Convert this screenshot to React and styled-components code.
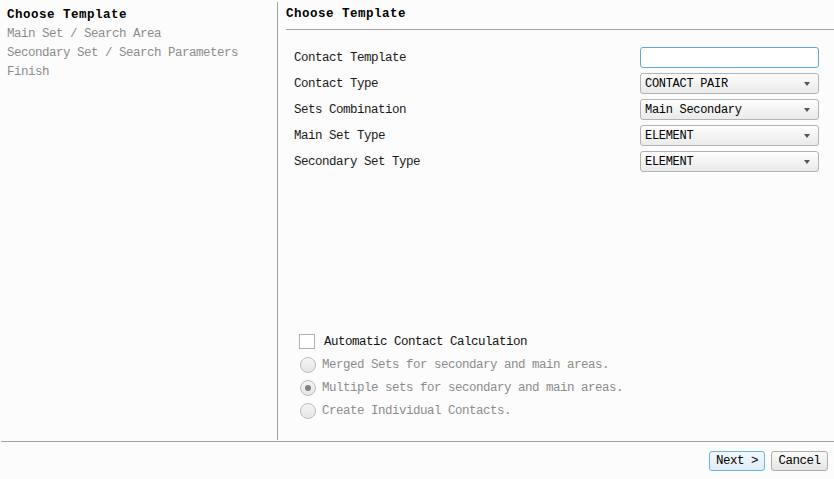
import React from "react";
import styled, { createGlobalStyle } from "styled-components";

const Global = createGlobalStyle`
  html, body { margin: 0; padding: 0; background: #fcfcfc; }
  * { box-sizing: border-box; }
`;

const Window = styled.div`
  width: 834px;
  height: 479px;
  background: #fcfcfc;
  font-family: "Liberation Mono", "DejaVu Sans Mono", monospace;
  font-size: 12.5px;
  letter-spacing: -0.5px;
  color: #111;
  display: flex;
  flex-direction: column;
  overflow: hidden;
`;

const Main = styled.div`
  height: 440px;
  padding-top: 2px;
  display: flex;
`;

const Sidebar = styled.nav`
  width: 278px;
  flex: none;
  border-right: 1px solid #a3a3a3;
  padding: 4px 0 0 7px;
  display: flex;
  flex-direction: column;
`;

const NavItem = styled.div`
  height: 19px;
  line-height: 19px;
  white-space: nowrap;
  color: ${(p) => (p.$active ? "#000" : "#8c8c8c")};
  font-weight: ${(p) => (p.$active ? 700 : 400)};
  letter-spacing: ${(p) => (p.$active ? "0.5px" : "-0.5px")};
`;

const Panel = styled.section`
  flex: 1;
  display: flex;
  flex-direction: column;
  padding-left: 8px;
`;

const Header = styled.div`
  height: 28px;
  border-bottom: 1px solid #a3a3a3;
  padding-top: 3px;
  line-height: 19px;
  font-weight: 700;
  letter-spacing: 0.5px;
  color: #000;
`;

const Form = styled.div`
  margin-top: 17px;
  padding: 0 15px 0 8px;
  display: grid;
  grid-template-columns: 1fr 179px;
  grid-auto-rows: 21px;
  row-gap: 5px;
  align-items: center;
`;

const Label = styled.label`
  white-space: nowrap;
  color: #1a1a1a;
`;

const TextInput = styled.div`
  height: 21px;
  border: 1px solid #5aa9e6;
  border-radius: 3px;
  background: #fff;
`;

const Select = styled.div`
  height: 21px;
  border: 1px solid #b3b3b3;
  border-radius: 3px;
  background: linear-gradient(#fdfdfd, #eaeaea);
  display: flex;
  align-items: center;
  justify-content: space-between;
  padding: 0 9px 0 4px;
  color: #000;
  white-space: nowrap;
  font-size: 12px;
  letter-spacing: -0.3px;
`;

const Arrow = styled.span`
  width: 0;
  height: 0;
  border-left: 3.5px solid transparent;
  border-right: 3.5px solid transparent;
  border-top: 4px solid #555;
  margin-right: -1px;
`;

const Options = styled.div`
  margin-top: auto;
  padding: 0 0 18px 13px;
  display: flex;
  flex-direction: column;
`;

const OptionRow = styled.div`
  height: 23px;
  display: flex;
  align-items: center;
  white-space: nowrap;
  color: ${(p) => (p.$disabled ? "#8c8c8c" : "#111")};
`;

const CheckBox = styled.span`
  width: 16px;
  height: 15px;
  border: 1px solid #b0b0b0;
  background: #fff;
  margin-right: 9px;
  flex: none;
`;

const Radio = styled.span`
  width: 16px;
  height: 16px;
  border-radius: 50%;
  border: 1px solid #bcbcbc;
  background: linear-gradient(#f4f4f4, #e6e6e6);
  margin: 0 6px 0 1px;
  flex: none;
  display: flex;
  align-items: center;
  justify-content: center;
  &::after {
    content: "";
    width: 6px;
    height: 6px;
    border-radius: 50%;
    background: ${(p) => (p.$checked ? "#808080" : "transparent")};
  }
`;

const Footer = styled.footer`
  margin: 1px 0 0 1px;
  border-top: 1px solid #a3a3a3;
  padding: 9px 6px 0 0;
  display: flex;
  justify-content: flex-end;
  gap: 6px;
`;

const Button = styled.button`
  height: 20px;
  width: ${(p) => p.$w}px;
  padding: 0;
  border-radius: 3px;
  font-family: inherit;
  font-size: 12.5px;
  letter-spacing: -0.5px;
  color: #000;
  border: 1px solid ${(p) => (p.$primary ? "#6ab2ea" : "#adadad")};
  background: ${(p) =>
    p.$primary
      ? "linear-gradient(#f2f8fd, #e2edf7)"
      : "linear-gradient(#fafafa, #e5e5e5)"};
`;

const fields = [
  ["Contact Template", null],
  ["Contact Type", "CONTACT PAIR"],
  ["Sets Combination", "Main Secondary"],
  ["Main Set Type", "ELEMENT"],
  ["Secondary Set Type", "ELEMENT"],
];

export default function App() {
  return (
    <>
      <Global />
      <Window>
        <Main>
          <Sidebar>
            <NavItem $active>Choose Template</NavItem>
            <NavItem>Main Set / Search Area</NavItem>
            <NavItem>Secondary Set / Search Parameters</NavItem>
            <NavItem>Finish</NavItem>
          </Sidebar>
          <Panel>
            <Header>Choose Template</Header>
            <Form>
              {fields.map(([label, value]) => (
                <React.Fragment key={label}>
                  <Label>{label}</Label>
                  {value === null ? (
                    <TextInput />
                  ) : (
                    <Select>
                      <span>{value}</span>
                      <Arrow />
                    </Select>
                  )}
                </React.Fragment>
              ))}
            </Form>
            <Options>
              <OptionRow>
                <CheckBox />
                Automatic Contact Calculation
              </OptionRow>
              <OptionRow $disabled>
                <Radio />
                Merged Sets for secondary and main areas.
              </OptionRow>
              <OptionRow $disabled>
                <Radio $checked />
                Multiple sets for secondary and main areas.
              </OptionRow>
              <OptionRow $disabled>
                <Radio />
                Create Individual Contacts.
              </OptionRow>
            </Options>
          </Panel>
        </Main>
        <Footer>
          <Button $primary $w={56}>Next &gt;</Button>
          <Button $w={57}>Cancel</Button>
        </Footer>
      </Window>
    </>
  );
}
